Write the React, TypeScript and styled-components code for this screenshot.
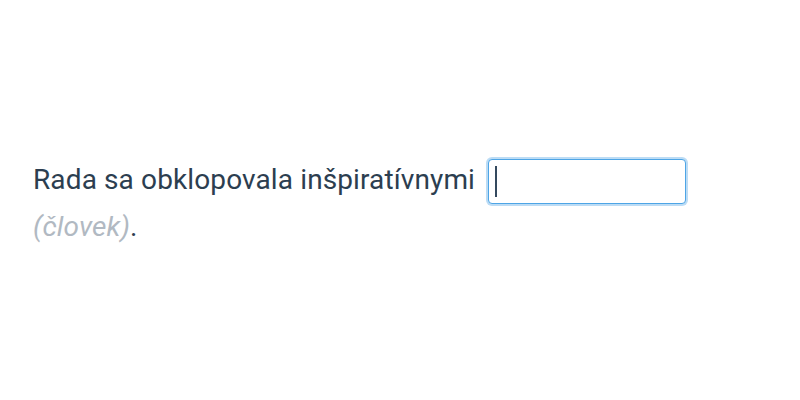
import React from 'react';
import styled, { createGlobalStyle } from 'styled-components';

const GlobalStyle = createGlobalStyle`
  html, body {
    margin: 0;
    padding: 0;
    background: #ffffff;
  }
`;

const Page = styled.div`
  height: 400px;
  display: flex;
  align-items: center;
  padding: 7px 33px 0;
  box-sizing: border-box;
  font-family: Roboto, 'Noto Sans', sans-serif;
`;

const Sentence = styled.p`
  margin: 0;
  font-size: 28px;
  letter-spacing: 0.12px;
  line-height: 46px;
  color: #2c3e50;
`;

const Field = styled.span`
  position: relative;
  display: inline-block;
  vertical-align: middle;
  margin-left: 6px;
  line-height: 0;
`;

const Blank = styled.input`
  width: 198px;
  height: 45px;
  margin: 0;
  padding: 0 7px;
  box-sizing: border-box;
  border: 1px solid #4ea5e6;
  border-radius: 4px;
  box-shadow: 0 0 0 2px #bcdcf5;
  outline: none;
  font: inherit;
  color: #2c3e50;
  caret-color: transparent;
`;

const Caret = styled.span`
  position: absolute;
  left: 7px;
  top: 7px;
  width: 2px;
  height: 31px;
  background: #34495e;
  pointer-events: none;
`;

const Hint = styled.span`
  font-style: italic;
  color: #b1b9c2;
`;

const App: React.FC = () => {
  return (
    <>
      <GlobalStyle />
      <Page>
        <Sentence>
          Rada sa obklopovala inšpiratívnymi{' '}
          <Field>
            <Blank type="text" autoFocus />
            <Caret />
          </Field>{' '}
          <Hint>(človek)</Hint>.
        </Sentence>
      </Page>
    </>
  );
};

export default App;
